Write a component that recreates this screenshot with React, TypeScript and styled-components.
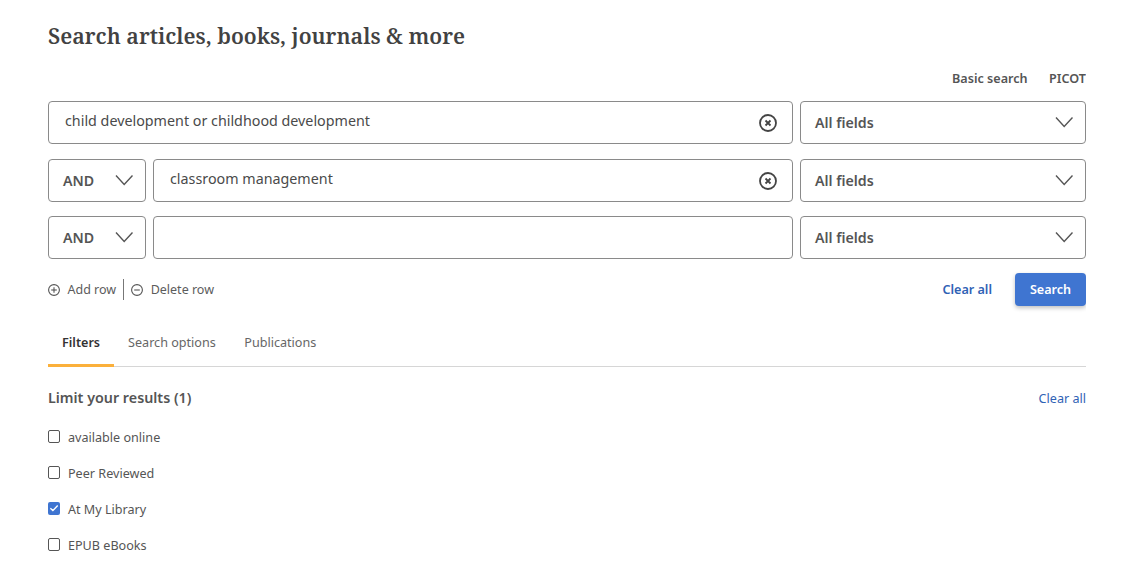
import React from "react";
import styled, { createGlobalStyle } from "styled-components";

const Global = createGlobalStyle`
  html, body { margin: 0; padding: 0; background: #fff; }
  body { font-family: "Noto Sans", sans-serif; color: #4a4a4a; overflow: hidden; }
`;

const Page = styled.div`
  width: 1038px;
  height: 575px;
  padding: 21px 0 0 48px;
  overflow: hidden;
`;

const Title = styled.h1`
  margin: 0;
  font-family: "Noto Serif", "DejaVu Serif", serif;
  font-weight: 600;
  font-size: 21.5px;
  line-height: 30px;
  color: #424242;
`;

const ModeLinks = styled.div`
  display: flex;
  justify-content: flex-end;
  gap: 21.5px;
  margin: 18px 0 13px 0;
  height: 19px;
`;

const ModeLink = styled.span`
  font-size: 12.6px;
  font-weight: 600;
  line-height: 19px;
  color: #555;
`;

const Rows = styled.div`
  display: flex;
  flex-direction: column;
`;

const Row = styled.div<{ $mb: number }>`
  display: flex;
  gap: 7px;
  height: 43px;
  margin-bottom: ${(p) => p.$mb}px;
`;

const Field = styled.div<{ $pad: number }>`
  flex: 1;
  min-width: 0;
  box-sizing: border-box;
  display: flex;
  align-items: center;
  justify-content: space-between;
  border: 1px solid #8a8a8a;
  border-radius: 4px;
  padding: 0 14px 0 ${(p) => p.$pad}px;
  font-size: 14.3px;
  color: #4a4a4a;
`;

const FieldText = styled.span`
  position: relative;
  top: -2px;
`;

const Select = styled.div<{ $w: number; $pad: number }>`
  width: ${(p) => p.$w}px;
  flex: none;
  box-sizing: border-box;
  display: flex;
  align-items: center;
  justify-content: space-between;
  border: 1px solid #8a8a8a;
  border-radius: 4px;
  padding: 0 12px 0 ${(p) => p.$pad}px;
  font-size: 14.2px;
  font-weight: 600;
  color: #555;
`;

const Actions = styled.div`
  display: flex;
  align-items: center;
  justify-content: space-between;
  margin-top: 14px;
  height: 33px;
`;

const ActionGroup = styled.div`
  display: flex;
  align-items: center;
`;

const RowAction = styled.span`
  display: flex;
  align-items: center;
  gap: 7.5px;
  font-size: 12.5px;
  color: #5c5c5c;
`;

const Divider = styled.span`
  width: 1px;
  height: 21px;
  background: #777;
  margin: 0 7px;
`;

const ClearStrong = styled.span`
  font-size: 12.6px;
  font-weight: 600;
  color: #2f62b5;
  margin-right: 23px;
`;

const SearchButton = styled.button`
  width: 71px;
  height: 33px;
  border: none;
  border-radius: 4px;
  background: #3f75d1;
  color: #fff;
  font-family: inherit;
  font-size: 12.6px;
  font-weight: 600;
  box-shadow: 0 2px 4px rgba(0, 0, 0, 0.25);
  padding: 0;
`;

const Tabs = styled.div`
  display: flex;
  margin-top: 20px;
  height: 40px;
  border-bottom: 1px solid #d6d6d6;
`;

const Tab = styled.div<{ $active?: boolean }>`
  box-sizing: border-box;
  height: 41px;
  padding: 0 14px;
  line-height: 34px;
  font-size: 12.6px;
  font-weight: ${(p) => (p.$active ? 600 : 400)};
  color: ${(p) => (p.$active ? "#333" : "#666")};
  border-bottom: ${(p) => (p.$active ? "3px solid #fbb03b" : "none")};
  margin-right: ${(p) => (p.$active ? 0 : 0.5)}px;
`;

const LimitHead = styled.div`
  display: flex;
  align-items: center;
  justify-content: space-between;
  margin-top: 20px;
  height: 20px;
`;

const LimitTitle = styled.span`
  font-size: 14.3px;
  font-weight: 600;
  color: #555;
`;

const ClearLink = styled.span`
  font-size: 12.6px;
  color: #2f62b5;
  padding-top: 2px;
`;

const Checks = styled.div`
  display: flex;
  flex-direction: column;
  gap: 16px;
  margin-top: 20px;
`;

const CheckRow = styled.div`
  display: flex;
  align-items: center;
  gap: 8px;
  height: 20px;
  font-size: 12.6px;
  color: #555;
`;

const Box = styled.span<{ $on?: boolean }>`
  width: 12px;
  height: 13px;
  box-sizing: border-box;
  flex: none;
  display: flex;
  align-items: center;
  border: ${(p) => (p.$on ? "0" : "1px solid #555")};
  background: ${(p) => (p.$on ? "#3f75d1" : "#fff")};
  border-radius: 2px;
  position: relative;
  top: -1px;
`;

const ChevronSvg = styled.svg`
  position: relative;
  top: -1px;
`;

const Chevron = () => (
  <ChevronSvg width="20" height="12" viewBox="0 0 20 12" fill="none" stroke="#555" strokeWidth="1.4">
    <path d="M3 1.5L11.2 10.5l8.3-9" />
  </ChevronSvg>
);

const ClearIcon = () => (
  <svg width="20" height="20" viewBox="0 0 20 20" fill="none" stroke="#444" strokeWidth="1.8">
    <circle cx="10" cy="10" r="8" />
    <path d="M7.5 7.5l5 5M12.5 7.5l-5 5" />
  </svg>
);

const CircleIcon = ({ plus }: { plus?: boolean }) => (
  <svg width="12" height="12" viewBox="0 0 12 12" fill="none" stroke="#555" strokeWidth="1.1">
    <circle cx="6" cy="6" r="5.4" />
    <path d="M3.2 6h5.6" />
    {plus && <path d="M6 3.2v5.6" />}
  </svg>
);

const Tick = () => (
  <svg width="12" height="12" viewBox="0 0 12 12" fill="none" stroke="#fff" strokeWidth="1.4">
    <path d="M2.4 6.2l2.5 2.4 4.8-5" />
  </svg>
);

const Op = () => (
  <Select $w={98} $pad={14}>
    AND
    <Chevron />
  </Select>
);

const AllFields = () => (
  <Select $w={286} $pad={14}>
    All fields
    <Chevron />
  </Select>
);

const filters: [string, boolean][] = [
  ["available online", false],
  ["Peer Reviewed", false],
  ["At My Library", true],
  ["EPUB eBooks", false],
];

export default function App() {
  return (
    <Page>
      <Global />
      <Title>Search articles, books, journals &amp; more</Title>
      <ModeLinks>
        <ModeLink>Basic search</ModeLink>
        <ModeLink>PICOT</ModeLink>
      </ModeLinks>
      <Rows>
        <Row $mb={15}>
          <Field $pad={16}>
            <FieldText>child development or childhood development</FieldText>
            <ClearIcon />
          </Field>
          <AllFields />
        </Row>
        <Row $mb={14}>
          <Op />
          <Field $pad={16}>
            <FieldText>classroom management</FieldText>
            <ClearIcon />
          </Field>
          <AllFields />
        </Row>
        <Row $mb={0}>
          <Op />
          <Field $pad={16} />
          <AllFields />
        </Row>
      </Rows>
      <Actions>
        <ActionGroup>
          <RowAction>
            <CircleIcon plus />
            Add row
          </RowAction>
          <Divider />
          <RowAction>
            <CircleIcon />
            Delete row
          </RowAction>
        </ActionGroup>
        <ActionGroup>
          <ClearStrong>Clear all</ClearStrong>
          <SearchButton>Search</SearchButton>
        </ActionGroup>
      </Actions>
      <Tabs>
        <Tab $active>Filters</Tab>
        <Tab>Search options</Tab>
        <Tab>Publications</Tab>
      </Tabs>
      <LimitHead>
        <LimitTitle>Limit your results (1)</LimitTitle>
        <ClearLink>Clear all</ClearLink>
      </LimitHead>
      <Checks>
        {filters.map(([label, on]) => (
          <CheckRow key={label}>
            <Box $on={on}>{on && <Tick />}</Box>
            {label}
          </CheckRow>
        ))}
      </Checks>
    </Page>
  );
}
